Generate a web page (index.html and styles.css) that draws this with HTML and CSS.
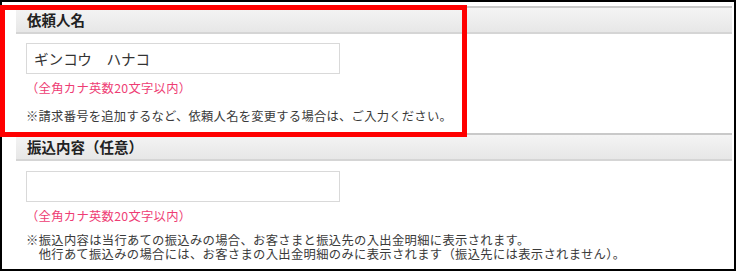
FILE: index.html
```html
<!DOCTYPE html>
<html lang="ja">
<head>
    <meta charset="UTF-8">
    <meta name="viewport" content="width=device-width, initial-scale=1.0">
    <title>依頼人名・振込内容</title>
    <link rel="stylesheet" href="styles.css">
</head>
<body>
    <div class="frame">
        <!-- 依頼人名 -->
        <div class="section">
            <div class="section-title">依頼人名</div>
            <div class="section-body">
                <input class="text-field" type="text" value="ギンコウ　ハナコ">
                <p class="hint">（全角カナ英数20文字以内）</p>
                <p class="note">※請求番号を追加するなど、依頼人名を変更する場合は、ご入力ください。</p>
            </div>
        </div>

        <!-- 振込内容 -->
        <div class="section">
            <div class="section-title">振込内容（任意）</div>
            <div class="section-body">
                <input class="text-field" type="text" value="">
                <p class="hint">（全角カナ英数20文字以内）</p>
                <p class="note note-tight">※振込内容は当行あての振込みの場合、お客さまと振込先の入出金明細に表示されます。<br>　他行あて振込みの場合には、お客さまの入出金明細のみに表示されます（振込先には表示されません）。</p>
            </div>
        </div>

        <!-- 強調枠 -->
        <div class="highlight"></div>
    </div>
</body>
</html>
```

FILE: styles.css
```css
* {
    margin: 0;
    padding: 0;
    box-sizing: border-box;
}

body {
    font-family: "Noto Sans CJK JP", "Noto Sans", sans-serif;
    background-color: #fff;
    color: #333;
    width: 737px;
    height: 273px;
    overflow: hidden;
}

.frame {
    position: relative;
    width: 736px;
    height: 271px;
    border: 2px solid #000;
    padding: 4px 2px 0 14px;
    display: flex;
    flex-direction: column;
}

.section-title {
    height: 28px;
    border-top: 2px solid #c9c9c9;
    border-bottom: 2px solid #d5d5d5;
    background: linear-gradient(#f4f4f4, #e7e7e7);
    padding-left: 11px;
    font-size: 14.5px;
    font-weight: bold;
    color: #222;
    line-height: 24px;
}

.section-body {
    padding-left: 10px;
    display: flex;
    flex-direction: column;
    align-items: flex-start;
}

.text-field {
    margin-top: 9px;
    width: 314px;
    height: 31px;
    border: 1px solid #d9d9d9;
    padding: 0 7px;
    font-family: "Noto Sans CJK JP", sans-serif;
    font-size: 14.6px;
    color: #333;
    background: #fff;
    outline: none;
}

.section + .section .text-field {
    margin-top: 10px;
}

.hint {
    margin-top: 6px;
    font-size: 12.3px;
    line-height: 16px;
    letter-spacing: 0.3px;
    color: #ee3d74;
}

.note {
    margin-top: 12px;
    font-size: 12.3px;
    line-height: 16px;
    letter-spacing: 0.25px;
    color: #3a3a3a;
    padding-bottom: 9px;
    white-space: nowrap;
}

.note-tight {
    line-height: 14px;
    letter-spacing: 0.33px;
    margin-top: 9px;
}

/* 強調枠 */
.highlight {
    position: absolute;
    left: -2px;
    top: 3px;
    width: 467px;
    height: 132px;
    border: 5px solid #ff0000;
    pointer-events: none;
}
```
